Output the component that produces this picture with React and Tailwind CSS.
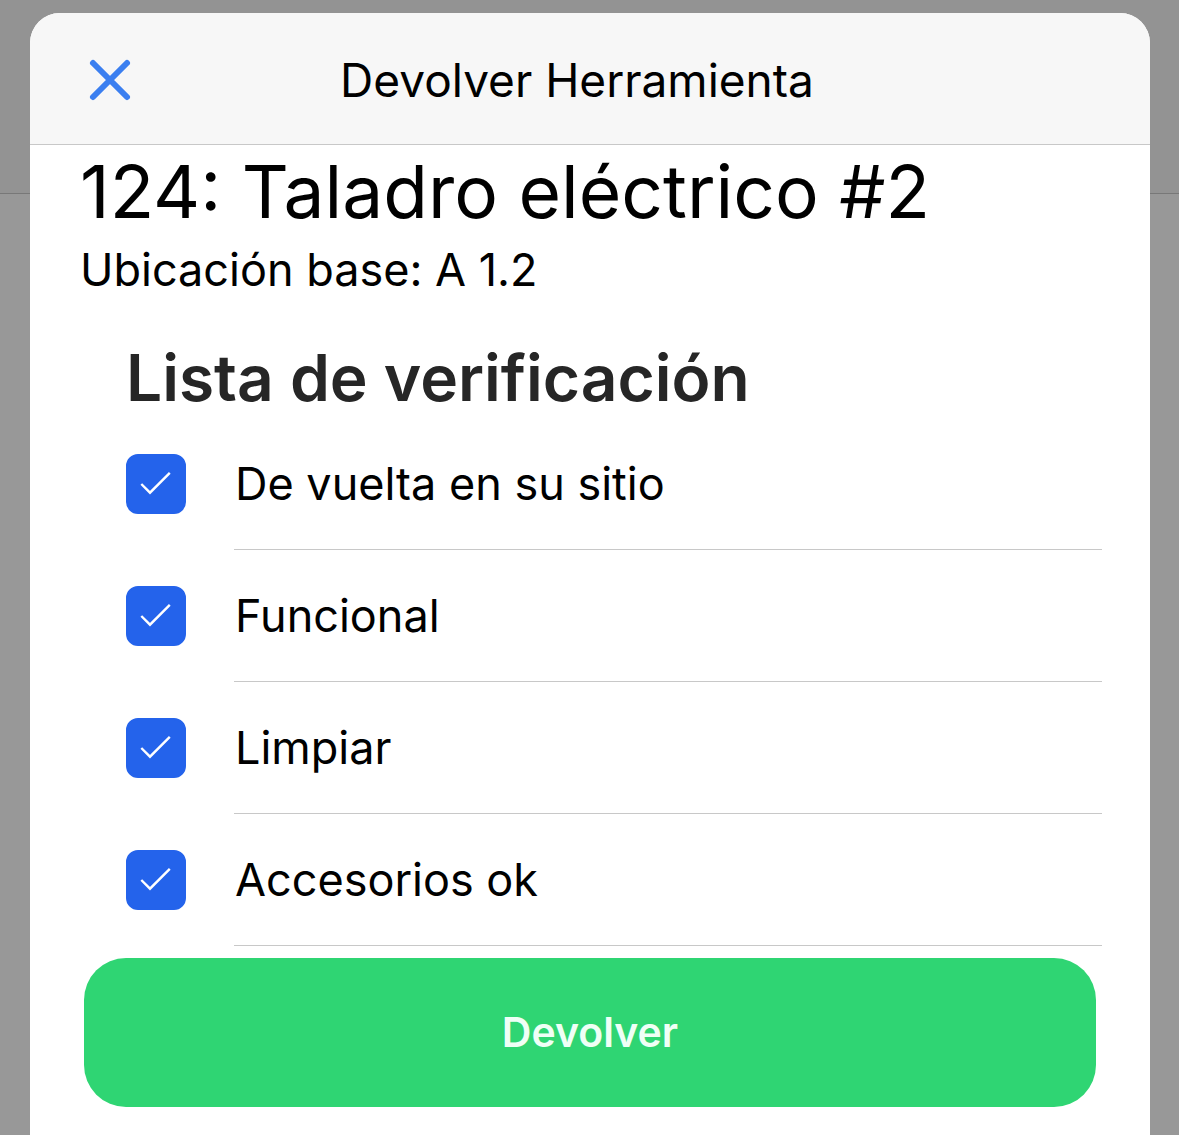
import React from 'react';

const checklist = [
    { id: 'sitio', label: 'De vuelta en su sitio' },
    { id: 'funcional', label: 'Funcional' },
    { id: 'limpiar', label: 'Limpiar' },
    { id: 'accesorios', label: 'Accesorios ok' }
];

const ChecklistItem = ({ item }) => (
    <li className="flex items-stretch gap-12">
        <span className="relative my-9 size-[60px] shrink-0">
            <input
                id={item.id}
                type="checkbox"
                defaultChecked
                className="peer block size-full appearance-none rounded-xl border-2 border-[#2463eb] checked:bg-[#2463eb]"
            />
            <svg
                viewBox="0 0 60 60"
                className="pointer-events-none absolute inset-0 hidden size-full peer-checked:block"
                fill="none"
                stroke="white"
                strokeWidth="2.4"
            >
                <path d="M15.3 30 L24 38.7 L43.8 18.9" />
            </svg>
        </span>
        <label
            htmlFor={item.id}
            className="flex flex-1 items-center border-b border-[#c8c8c8] pt-px pl-px text-[45px]"
        >
            {item.label}
        </label>
    </li>
);

// Dimmed page behind the sheet
const Backdrop = () => (
    <div className="h-[194px] border-b border-[#787878] bg-[#939393]" />
);

const App = () => {
    return (
        <div className="flex min-h-screen bg-[#989898] font-['Inter',sans-serif] text-black">
            <div className="w-[30px] shrink-0">
                <Backdrop />
            </div>
            <div className="flex flex-1 flex-col">
                <div className="-mb-8 h-[45px] bg-[#939393]" />
                <main className="flex flex-1 flex-col overflow-hidden rounded-t-[30px] bg-white">
                    <header className="grid h-[132px] grid-cols-[54px_1fr_80px] items-center border-b border-[#c8c8c8] bg-[#f7f7f7] px-[53px] pt-0.5">
                        <button type="button" aria-label="Cerrar" className="size-[54px] text-[#3b7ff0]">
                            <svg viewBox="0 0 54 54" className="size-full" fill="none" stroke="currentColor" strokeWidth="6" strokeLinecap="round">
                                <path d="M10 10 L44 44 M44 10 L10 44" />
                            </svg>
                        </button>
                        <h1 className="pt-0.5 text-center text-[46px]">Devolver Herramienta</h1>
                    </header>
                    <section className="px-[50px] pt-[7px]">
                        <h2 className="text-[73px] leading-[80px]">124: Taladro eléctrico #2</h2>
                        <p className="text-[45px] leading-[76px]">Ubicación base: A 1.2</p>
                    </section>
                    <section className="px-12 pl-24 pt-8">
                        <h3 className="pb-0.5 text-[64px] leading-[76px] font-semibold text-[#262626]">Lista de verificación</h3>
                        <ul>
                            {checklist.map((item) => (
                                <ChecklistItem key={item.id} item={item} />
                            ))}
                        </ul>
                    </section>
                    <div className="px-[54px] pt-3 pb-7">
                        <button type="button" className="h-[149px] w-full rounded-[42px] bg-[#2fd573] text-[41px] font-semibold text-[#effff6]">
                            Devolver
                        </button>
                    </div>
                </main>
            </div>
            <div className="w-[29px] shrink-0">
                <Backdrop />
            </div>
        </div>
    );
};

export default App;
